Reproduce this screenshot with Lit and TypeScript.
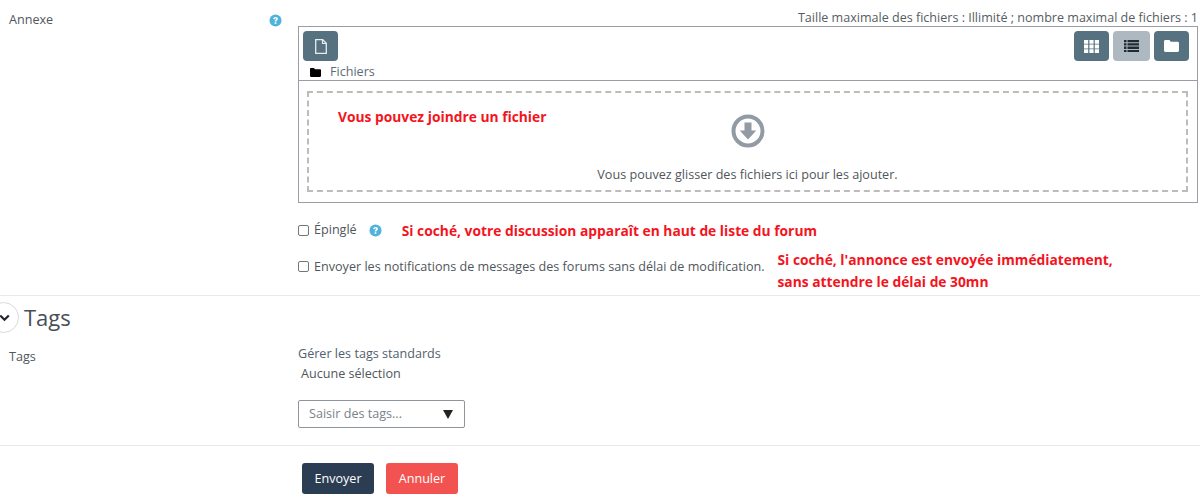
import { LitElement, html, css, svg } from "lit";
import { customElement } from "lit/decorators.js";

const help = svg`<svg class="help" viewBox="0 0 14 14" width="13" height="13"><circle cx="7" cy="7" r="6.5" fill="#4fb3dc"/><path d="M4.500 5.400C4.700 3.900 5.800 3.100 7.100 3.100c1.500 0 2.500.9 2.500 2.100 0 1.700-1.700 1.800-1.700 3H6.100c0-2.100 1.500-2.100 1.500-2.900 0-.4-.3-.6-.6-.6-.5 0-.7.300-.8.900z" fill="#fff"/><rect x="6.100" y="8.900" width="1.800" height="1.700" fill="#fff"/></svg>`;

@customElement("app-root")
export class AppRoot extends LitElement {
  static styles = css`
    :host { display: block; width: 1200px; height: 494px; overflow: hidden; background: #fff; font-family: "Open Sans", sans-serif; font-size: 12.6px; line-height: 18px; color: #4f5a66; }
    svg { display: block; }
    .row { display: grid; grid-template-columns: 298px 900px; }
    .label { padding: 11px 0 0 9px; position: relative; color: #50565c; }
    .help-top { position: absolute; left: 269px; top: 14px; }
    .limit { height: 26px; padding-top: 8px; box-sizing: border-box; text-align: right; line-height: 20px; white-space: nowrap; color: #555c63; font-size: 12.55px; }
    .picker { border: 1px solid #9a9da6; height: 177px; box-sizing: border-box; display: flex; flex-direction: column; }
    .toolbar { height: 49px; border-bottom: 1px solid #9a9da6; padding: 4px 8px 0 4px; flex: none; }
    .btns { display: flex; justify-content: space-between; }
    .group { display: flex; gap: 4px; }
    .btn { width: 35px; height: 30px; border-radius: 4px; background: #56717f; display: flex; align-items: center; justify-content: center; }
    .btn.on { background: #aeb8c1; width: 37px; }
    .crumb { display: flex; align-items: center; margin: 3px 0 0 7px; height: 16px; gap: 9px; color: #5d6b78; }
    .drop { margin: 10px 9px 10px 8px; flex: 1; position: relative; border: 2px dashed #bcbcbc; display: flex; flex-direction: column; align-items: center; color: #50565c; }
    .drop svg { margin-top: 21px; }
    .drop .hint { margin-top: 18px; }
    .note { font-weight: 700; font-size: 13.8px; color: #f4141d; line-height: 22px; white-space: nowrap; }
    .drop .note { position: absolute; left: 29px; top: 13px; }
    .checks { margin-left: 298px; }
    .check { display: flex; align-items: center; color: #50565c; white-space: nowrap; }
    .box { width: 11px; height: 11px; box-sizing: border-box; border: 1px solid #767676; border-radius: 2px; margin-right: 5px; flex: none; }
    .c1 { height: 20px; margin-top: 17px; }
    .c1 .help { margin-left: 12px; }
    .c1 .note { margin: 2px 0 0 20px; }
    .c2 { margin-top: 10px; height: 45px; align-items: flex-start; }
    .c2 .box { margin-top: 11px; }
    .c2 .t { margin-top: 8px; }
    .c2 .note { margin: -1px 0 0 13px; }
    .sep { border-top: 1px solid #e6e8ec; }
    .tags-h { height: 39px; padding-bottom: 2px; margin-top: 1px; display: flex; align-items: center; padding-left: 24px; position: relative; font-size: 22px; color: #484f56; }
    .circle { position: absolute; left: -12px; top: 5px; width: 31px; height: 31px; box-sizing: border-box; border: 1px solid #d9dadd; border-radius: 50%; display: flex; align-items: center; justify-content: center; background: #fff; }
    .circle svg { margin-left: 2px; }
    .tagrow { display: grid; grid-template-columns: 298px 1fr; height: 107px; }
    .tl { padding: 10px 0 0 9px; color: #50565c; }
    .tv { padding-top: 7px; }
    .link { color: #52606d; }
    .none { margin: 2px 0 0 3px; color: #50565c; }
    .select { margin-top: 17px; width: 167px; height: 28px; box-sizing: border-box; border: 1px solid #8f959c; border-radius: 2px; display: flex; align-items: center; justify-content: space-between; padding: 0 11px 0 10px; color: #7b8288; }
    .tri { width: 0; height: 0; border-left: 5px solid transparent; border-right: 5px solid transparent; border-top: 9px solid #222; }
    .actions { display: flex; gap: 12px; padding: 17px 0 0 302px; }
    .action { width: 72px; height: 31px; border-radius: 3px; color: #fff; display: flex; align-items: center; justify-content: center; background: #2b3d52; }
    .action.red { background: #f25350; }
  `;

  render() {
    return html`
      <div class="row">
        <div class="label">Annexe<span class="help-top">${help}</span></div>
        <div>
          <div class="limit">Taille maximale des fichiers : Illimité ; nombre maximal de fichiers : 1</div>
          <div class="picker">
            <div class="toolbar">
              <div class="btns">
                <div class="btn">
                  <svg width="12" height="15" viewBox="0 0 12 15"><path d="M.7.7h7l3.600 3.600v10H.7z" fill="none" stroke="#e8ecef" stroke-width="1.300"/><path d="M7.500.7v3.800h3.800" fill="none" stroke="#e8ecef" stroke-width="1.200"/></svg>
                </div>
                <div class="group">
                  <div class="btn"><svg width="15" height="13" viewBox="0 0 15 13"><path fill="#fff" d="M0 0h4.200v3.800H0zM5.400 0h4.200v3.800H5.400zM10.800 0H15v3.800h-4.200zM0 4.600h4.200v3.800H0zM5.400 4.600h4.200v3.800H5.400zM10.800 4.600H15v3.800h-4.200zM0 9.200h4.200V13H0zM5.400 9.200h4.200V13H5.400zM10.800 9.200H15V13h-4.200z"/></svg></div>
                  <div class="btn on"><svg width="15" height="12" viewBox="0 0 15 12"><path fill="#1f2b33" d="M0 0h2.500v2.200H0zM3.500 0H15v2.200H3.500zM0 3.200h2.500v2.400H0zM3.500 3.200H15v2.400H3.500zM0 6.600h2.500V9H0zM3.500 6.600H15V9H3.500zM0 9.900h2.500V12H0zM3.500 9.900H15V12H3.500z"/></svg></div>
                  <div class="btn"><svg width="15" height="12" viewBox="0 0 15 12"><path fill="#fff" d="M1.400 0h4l1.400 1.700h6.800c.8 0 1.400.6 1.400 1.400v7.500c0 .8-.6 1.400-1.400 1.400H1.400C.6 12 0 11.400 0 10.600V1.400C0 .6.600 0 1.400 0z"/></svg></div>
                </div>
              </div>
              <div class="crumb">
                <svg width="11" height="9" viewBox="0 0 15 12"><path fill="#000" d="M1.400 0h4l1.400 1.700h6.800c.8 0 1.400.6 1.400 1.400v7.500c0 .8-.6 1.400-1.400 1.400H1.400C.6 12 0 11.400 0 10.600V1.400C0 .6.600 0 1.400 0z"/></svg>
                <span>Fichiers</span>
              </div>
            </div>
            <div class="drop">
              <span class="note">Vous pouvez joindre un fichier</span>
              <svg width="34" height="34" viewBox="0 0 34 34"><circle cx="17" cy="17" r="14.500" fill="none" stroke="#929aa4" stroke-width="4"/><path fill="#929aa4" d="M13.500 8.500h7v8h4.800L17 25.500 8.700 16.500h4.800z"/></svg>
              <span class="hint">Vous pouvez glisser des fichiers ici pour les ajouter.</span>
            </div>
          </div>
        </div>
      </div>
      <div class="checks">
        <div class="check c1"><span class="box"></span><span>Épinglé</span>${help}<span class="note">Si coché, votre discussion apparaît en haut de liste du forum</span></div>
        <div class="check c2"><span class="box"></span><span class="t">Envoyer les notifications de messages des forums sans délai de modification.</span><span class="note">Si coché, l'annonce est envoyée immédiatement,<br />sans attendre le délai de 30mn</span></div>
      </div>
      <div class="sep"></div>
      <div class="tags-h">
        <span class="circle"><svg width="11" height="8" viewBox="0 0 11 8"><path d="M1.200 1.500l4.300 4.300 4.300-4.300" fill="none" stroke="#20262c" stroke-width="2.200"/></svg></span>
        Tags
      </div>
      <div class="tagrow">
        <div class="tl">Tags</div>
        <div class="tv">
          <div class="link">Gérer les tags standards</div>
          <div class="none">Aucune sélection</div>
          <div class="select"><span>Saisir des tags...</span><span class="tri"></span></div>
        </div>
      </div>
      <div class="sep"></div>
      <div class="actions">
        <div class="action">Envoyer</div>
        <div class="action red">Annuler</div>
      </div>
    `;
  }
}
